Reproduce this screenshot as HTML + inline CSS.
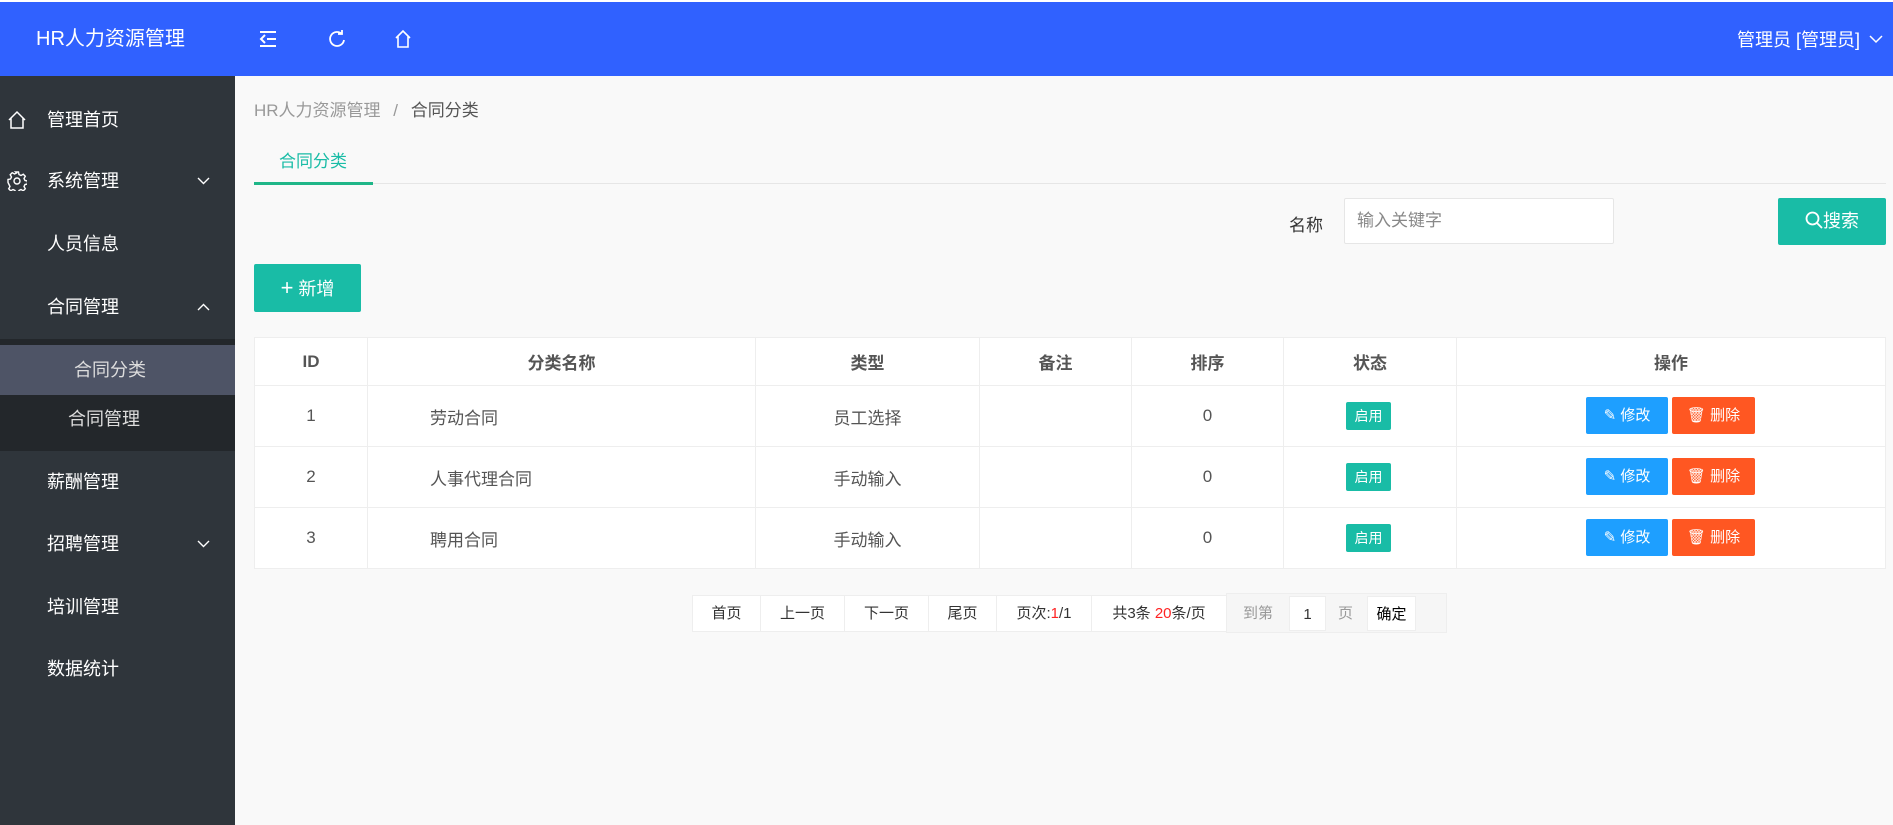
<!DOCTYPE html>
<html><head><meta charset="utf-8"><style>
*{margin:0;padding:0;box-sizing:border-box}
body{width:1893px;height:825px;overflow:hidden;background:#f9f9f9;font-family:"Liberation Sans","Noto Sans CJK SC",sans-serif;position:relative;color:#333}
.abs{position:absolute}
#top{left:0;top:0;width:1893px;height:76px;background:#3061ff;border-top:2px solid #fff}
#side{left:0;top:76px;width:235px;height:749px;background:#2f353b}
.mi{position:absolute;left:47px;font-size:18px;color:#fff;line-height:24px}
table{border-collapse:collapse;position:absolute;left:254px;top:337px;width:1632px;background:#fff;font-size:17px;color:#555}
td,th{border:1px solid #eee;text-align:center;height:61px}
th{height:48px;font-weight:bold;color:#555}
.btn{position:absolute;color:#fff;border-radius:2px;font-size:15px;text-align:center;line-height:37px}
.pg{position:absolute;top:595px;height:37px;border:1px solid #eee;background:#fff;font-size:15px;line-height:35px;text-align:center;color:#333}
</style></head><body>
<div id="top" class="abs">
 <div class="abs" style="left:36px;top:0;height:74px;line-height:74px;color:#fff;font-size:20px">HR人力资源管理</div>
 <svg class="abs" style="left:259px;top:28px" width="18" height="18" viewBox="0 0 18 18" fill="none" stroke="#fff" stroke-width="2"><path d="M1 2h16M8 9h9M1 16h16M6 5l-4 4 4 4"/></svg>
 <svg class="abs" style="left:328px;top:27px" width="18" height="20" viewBox="0 0 18 20" fill="none" stroke="#fff" stroke-width="1.8"><path d="M14 5A7 7 0 1 0 16 11M14 1v4h-4"/></svg>
 <svg class="abs" style="left:394px;top:27px" width="18" height="20" viewBox="0 0 18 20" fill="none" stroke="#fff" stroke-width="1.6"><path d="M2 9L9 2l7 7M4 7v11h10V7"/></svg>
 <div class="abs" style="right:33px;top:24px;color:#fff;font-size:18px">管理员 [管理员]</div>
 <svg class="abs" style="right:10px;top:33px" width="14" height="9" viewBox="0 0 14 9" fill="none" stroke="#fff" stroke-width="1.5"><path d="M1 1l6 6 6-6"/></svg>
</div>
<div id="side" class="abs">
 <div class="abs" style="left:0;top:263px;width:235px;height:112px;background:#23272b"></div>
 <div class="abs" style="left:0;top:269px;width:235px;height:50px;background:#4e5466"></div>
 <svg class="abs" style="left:7px;top:34px" width="20" height="20" viewBox="0 0 20 20" fill="none" stroke="#fff" stroke-width="1.5"><path d="M2 10l8-8 8 8M4 8v10h12V8"/></svg>
 <svg class="abs" style="left:7px;top:95px" width="20" height="20" viewBox="0 0 20 20" fill="none" stroke="#fff" stroke-width="1.4"><circle cx="10" cy="10" r="3"/><path d="M8.5 1h3l.5 2.5 2 1 2.3-1.3 2 2-1.3 2.3 1 2 2.5.5v3l-2.5.5-1 2 1.3 2.3-2 2-2.3-1.3-2 1-.5 2.5h-3l-.5-2.5-2-1-2.3 1.3-2-2 1.3-2.3-1-2L1 11.5v-3l2.5-.5 1-2-1.3-2.3 2-2 2.3 1.3 2-1z"/></svg>
 <div class="mi" style="top:32px">管理首页</div>
 <div class="mi" style="top:93px">系统管理</div>
 <svg class="abs" style="left:197px;top:101px" width="13" height="8" viewBox="0 0 13 8" fill="none" stroke="#fff" stroke-width="1.4"><path d="M1 1l5.5 5.5L12 1"/></svg>
 <div class="mi" style="top:156px">人员信息</div>
 <div class="mi" style="top:219px">合同管理</div>
 <svg class="abs" style="left:197px;top:227px" width="13" height="8" viewBox="0 0 13 8" fill="none" stroke="#fff" stroke-width="1.4"><path d="M1 7l5.5-5.5L12 7"/></svg>
 <div class="mi" style="top:282px;left:74px;color:#ddd">合同分类</div>
 <div class="mi" style="top:331px;left:68px;color:#ddd">合同管理</div>
 <div class="mi" style="top:394px">薪酬管理</div>
 <div class="mi" style="top:456px">招聘管理</div>
 <svg class="abs" style="left:197px;top:464px" width="13" height="8" viewBox="0 0 13 8" fill="none" stroke="#fff" stroke-width="1.4"><path d="M1 1l5.5 5.5L12 1"/></svg>
 <div class="mi" style="top:519px">培训管理</div>
 <div class="mi" style="top:581px">数据统计</div>
</div>
<div class="abs" style="left:254px;top:96px;font-size:17px;color:#999">HR人力资源管理 <span style="margin:0 8px">/</span> <span style="color:#555">合同分类</span></div>
<div class="abs" style="left:279px;top:147px;font-size:17px;color:#19bca6">合同分类</div>
<div class="abs" style="left:254px;top:183px;width:1632px;height:1px;background:#e6e6e6"></div>
<div class="abs" style="left:254px;top:182px;width:119px;height:3px;background:#1fb688"></div>
<div class="abs" style="left:1289px;top:211px;font-size:17px;color:#333">名称</div>
<div class="abs" style="left:1344px;top:198px;width:270px;height:46px;background:#fff;border:1px solid #e6e6e6;border-radius:2px;font-size:17px;color:#888;line-height:44px;padding-left:12px">输入关键字</div>
<div class="btn" style="left:1778px;top:198px;width:108px;height:47px;background:#19bca6;font-size:18px;line-height:47px"><svg width="18" height="18" viewBox="0 0 18 18" fill="none" stroke="#fff" stroke-width="1.8" style="vertical-align:-2px"><circle cx="7.5" cy="7.5" r="6"/><path d="M12 12l5 5"/></svg>搜索</div>
<div class="btn" style="left:254px;top:264px;width:107px;height:48px;background:#19bca6;font-size:18px;line-height:48px"><b style="font-size:22px;font-weight:normal">+</b> 新增</div>
<table>
<tr><th style="width:113px">ID</th><th style="width:388px">分类名称</th><th style="width:224px">类型</th><th style="width:152px">备注</th><th style="width:152px">排序</th><th style="width:173px">状态</th><th>操作</th></tr>
<tr><td>1</td><td style="text-align:left;padding-left:62px">劳动合同</td><td>员工选择</td><td></td><td>0</td><td></td><td></td></tr>
<tr><td>2</td><td style="text-align:left;padding-left:62px">人事代理合同</td><td>手动输入</td><td></td><td>0</td><td></td><td></td></tr>
<tr><td>3</td><td style="text-align:left;padding-left:62px">聘用合同</td><td>手动输入</td><td></td><td>0</td><td></td><td></td></tr>
</table>
<div class="btn" style="left:1346px;top:402px;width:45px;height:28px;line-height:28px;background:#19bca6;font-size:14px">启用</div>
<div class="btn" style="left:1346px;top:463px;width:45px;height:28px;line-height:28px;background:#19bca6;font-size:14px">启用</div>
<div class="btn" style="left:1346px;top:524px;width:45px;height:28px;line-height:28px;background:#19bca6;font-size:14px">启用</div>
<div class="btn" style="left:1586px;top:397px;width:82px;height:37px;background:#1e9fff">✎ 修改</div>
<div class="btn" style="left:1672px;top:397px;width:83px;height:37px;background:#ff5722">🗑 删除</div>
<div class="btn" style="left:1586px;top:458px;width:82px;height:37px;background:#1e9fff">✎ 修改</div>
<div class="btn" style="left:1672px;top:458px;width:83px;height:37px;background:#ff5722">🗑 删除</div>
<div class="btn" style="left:1586px;top:519px;width:82px;height:37px;background:#1e9fff">✎ 修改</div>
<div class="btn" style="left:1672px;top:519px;width:83px;height:37px;background:#ff5722">🗑 删除</div>
<div class="pg" style="left:692px;width:69px">首页</div>
<div class="pg" style="left:760px;width:85px">上一页</div>
<div class="pg" style="left:844px;width:85px">下一页</div>
<div class="pg" style="left:928px;width:69px">尾页</div>
<div class="pg" style="left:996px;width:96px">页次:<span style="color:#f22">1</span>/1</div>
<div class="pg" style="left:1091px;width:136px">共3条 <span style="color:#f22">20</span>条/页</div>
<div class="pg" style="left:1226px;width:221px;background:#f6f6f6;top:593px;height:40px;color:#999;text-align:left"><span style="position:absolute;left:16px;top:2px">到第</span><span style="position:absolute;left:62px;top:2px;width:37px;height:35px;background:#fff;border:1px solid #eee;color:#333;text-align:center">1</span><span style="position:absolute;left:111px;top:2px">页</span><span style="position:absolute;left:140px;top:2px;width:49px;height:35px;background:#fff;border:1px solid #eee;color:#000;text-align:center">确定</span></div>
</body></html>
